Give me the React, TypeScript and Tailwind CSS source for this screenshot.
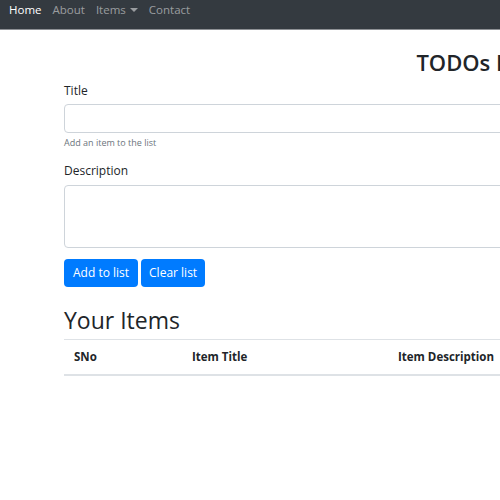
import React from 'react'

export default function App() {
  return (
    <div className="w-[500px] h-[500px] overflow-hidden bg-white text-[#212529]" style={{ fontFamily: '"Open Sans", "Noto Sans", sans-serif' }}>
      <nav className="h-[30px] w-full bg-[#343a40] border-b border-[#8e9195] flex items-start pt-[1px] pl-[9px] gap-[11px] text-[11.5px] leading-[18px]">
        <a className="text-white">Home</a>
        <a className="text-white/50">About</a>
        <a className="text-white/50 flex items-center gap-[4px]">
          Items
          <span className="inline-block w-0 h-0 border-l-[4px] border-r-[4px] border-t-[4px] border-l-transparent border-r-transparent border-t-white/50" />
        </a>
        <a className="text-white/50">Contact</a>
      </nav>
      <div className="w-[822px] ml-[64px]">
        <h2 className="mt-[16px] h-[32px] text-center text-[22px] font-semibold leading-[32px]">TODOs List</h2>
        <form>
          <div className="mt-[3px]">
            <label htmlFor="title" className="block text-[12px] leading-[20px]">Title</label>
            <input id="title" type="text" className="mt-[3px] block w-full h-[29px] rounded-[4px] border border-[#ced4da] bg-white px-[10px] text-[12px]" />
            <small className="block mt-[3px] text-[9px] leading-[14px] text-[#6c757d]">Add an item to the list</small>
          </div>
          <div className="mt-[11px]">
            <label htmlFor="desc" className="block text-[12px] leading-[20px]">Description</label>
            <textarea id="desc" className="mt-[4px] block w-full h-[63px] rounded-[4px] border border-[#ced4da] bg-white px-[10px] text-[12px] resize-none" />
          </div>
          <div className="mt-[11px] flex gap-[3px]">
            <button type="button" className="h-[28px] px-[9px] rounded-[4px] bg-[#007bff] text-white text-[12px]">Add to list</button>
            <button type="button" className="h-[28px] px-[8px] rounded-[4px] bg-[#007bff] text-white text-[12px]">Clear list</button>
          </div>
        </form>
        <h2 className="mt-[17px] text-[23px] leading-[32px] font-medium">Your Items</h2>
        <div className="mt-[3px] border-t border-b-2 border-[#dee2e6] h-[37px] grid grid-cols-[118px_206px_1fr] items-center text-[11.5px] font-bold">
          <div className="pl-[10px]">SNo</div>
          <div className="pl-[10px]">Item Title</div>
          <div className="pl-[10px]">Item Description</div>
        </div>
      </div>
    </div>
  )
}
